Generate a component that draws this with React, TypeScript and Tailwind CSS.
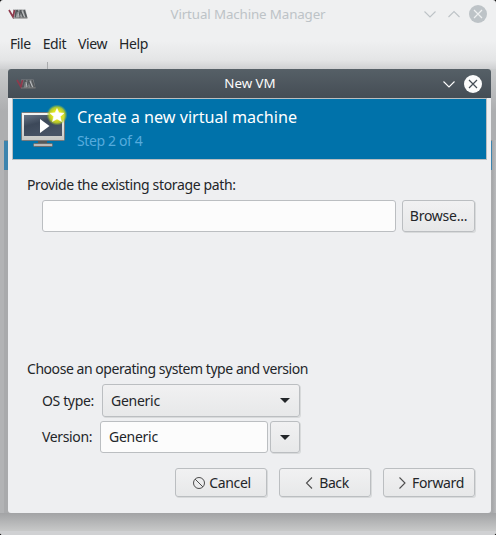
import type { ReactNode } from "react";

function Logo() {
  return (
    <svg width="20" height="10" viewBox="0 0 20 10">
      <path d="M5 0.500H17.500L19.500 9H7.500Z" fill="#8d9092" opacity="0.8" />
      <path d="M8.500 1L7 8.500M9 1L12 8.500M12.500 1L11.500 6M12.500 1L15.500 8.500M16 1L18.500 8.500" stroke="#54585b" strokeWidth="1.6" fill="none" />
      <path d="M10 3L11 8M14 2L16.500 8" stroke="#c4c6c7" strokeWidth="0.9" />
      <path d="M1 1L5 8L6.500 1" stroke="#8e3a4c" strokeWidth="1.700" fill="none" />
      <path d="M5 9H19.500" stroke="#777" strokeWidth="1" />
    </svg>
  );
}

function Chevron({ d, color }: { d: string; color: string }) {
  return (
    <svg width="12" height="12" viewBox="0 0 12 12" fill="none" stroke={color} strokeWidth="1.1">
      <path d={d} />
    </svg>
  );
}

function CloseIcon({ bg, fg }: { bg: string; fg: string }) {
  return (
    <svg width="18" height="18" viewBox="0 0 18 18">
      <circle cx="9" cy="9" r="9" fill={bg} />
      <path d="M5 5L13 13M13 5L5 13" stroke={fg} strokeWidth="1.2" />
    </svg>
  );
}

function ComputerIcon() {
  return (
    <svg width="48" height="44" viewBox="0 0 48 44" className="ml-[8px] mt-[7px] shrink-0 overflow-visible">
      <defs>
        <linearGradient id="frame" x1="0" y1="0" x2="0" y2="1">
          <stop offset="0" stopColor="#f6f6f4" />
          <stop offset="1" stopColor="#c6c7c4" />
        </linearGradient>
        <linearGradient id="screen" x1="0" y1="0" x2="0.5" y2="1">
          <stop offset="0" stopColor="#677485" />
          <stop offset="0.45" stopColor="#3c4859" />
          <stop offset="1" stopColor="#485466" />
        </linearGradient>
        <radialGradient id="glow">
          <stop offset="0.45" stopColor="#e3e61a" />
          <stop offset="0.75" stopColor="#c4d422" stopOpacity="0.85" />
          <stop offset="1" stopColor="#8fbf40" stopOpacity="0" />
        </radialGradient>
      </defs>
      <path d="M17 34H26V38H17Z" fill="#55585a" />
      <rect x="12.500" y="37.500" width="19" height="3" rx="1" fill="#bbb" stroke="#6a6c6d" />
      <rect x="0.500" y="6.500" width="43" height="28" rx="1" fill="url(#frame)" stroke="#77787a" />
      <rect x="3" y="9" width="38" height="21" fill="url(#screen)" />
      <path d="M19 13V27L28.500 20Z" fill="#fff" />
      <circle cx="36" cy="9" r="10.500" fill="url(#glow)" />
      <path d="M36 2.500L38 6.700L43 7.200L39.300 10.500L40.500 15.500L36 12.900L31.500 15.500L32.700 10.500L29 7.200L34 6.700Z" fill="#fff" stroke="#fff" strokeWidth="0.5" />
    </svg>
  );
}

function Button({ className, children }: { className: string; children: ReactNode }) {
  return (
    <button className={`flex items-center rounded-[3px] border border-[#bbbec1] bg-linear-to-b from-[#f1f1f2] to-[#e7e8e9] shadow-[1px_1px_0_#d8dadb] ${className}`}>
      {children}
    </button>
  );
}

function Arrow() {
  return (
    <svg width="10" height="5" viewBox="0 0 10 5">
      <path d="M0 0H10L5 5Z" fill="#232629" />
    </svg>
  );
}

function Dialog() {
  return (
    <section className="absolute left-2 top-[69px] flex h-[444px] w-[483px] flex-col overflow-hidden rounded-[3px] bg-[#eeeff1]">
      <header className="flex h-[29px] shrink-0 items-center bg-linear-to-b from-[#566067] to-[#454d55] pl-2 pr-[9px] text-[13.33px] tracking-normal text-[#fcfcfc]">
        <div className="w-[60px]"><Logo /></div>
        <h2 className="flex-1 pl-[18px] text-center">New VM</h2>
        <div className="flex w-[76px] items-center justify-end gap-[9px]">
          <Chevron d="M0.500 3.500L6 9L11.500 3.500" color="#fcfcfc" />
          <CloseIcon bg="#fcfcfc" fg="#454d55" />
        </div>
      </header>
      <div className="mx-1 flex h-[62px] shrink-0 border border-[#b9bec1] bg-[#0072aa]">
        <ComputerIcon />
        <div className="pl-[8px] pt-[6px]">
          <div className="h-[24px] text-[16.15px] leading-[24px] tracking-normal text-white">Create a new virtual machine</div>
          <div className="h-[23px] leading-[23px] text-[#56abdd]">Step 2 of 4</div>
        </div>
      </div>
      <div className="flex flex-1 flex-col pl-[19px] pr-4 pt-[14px]">
        <p className="h-[21px] leading-[21px]">Provide the existing storage path:</p>
        <div className="ml-[15px] mt-[5px] flex gap-[6px]">
          <div className="h-8 flex-1 rounded-[3px] border border-[#bbbec1] bg-[#fcfcfc]" />
          <Button className="h-8 w-[73px] justify-center pb-px tracking-[-0.26px]">Browse...</Button>
        </div>
        <p className="mt-[126px] h-[21px] leading-[21px] tracking-[-0.45px]">Choose an operating system type and version</p>
        <div className="ml-[15px] mt-[5px] flex items-center">
          <span className="w-[60px]">OS type:</span>
          <Button className="h-[33px] w-[198px] justify-between pl-2 pr-[9px] tracking-[-0.26px]">
            <span>Generic</span><Arrow />
          </Button>
        </div>
        <div className="ml-[15px] mt-1 flex items-center">
          <span className="w-[58px] pb-[2px]">Version:</span>
          <div className="flex h-8 w-[168px] items-center rounded-[3px] border border-[#bbbec1] bg-[#fcfcfc] pb-[2px] pl-2 tracking-[-0.26px]">Generic</div>
          <Button className="ml-[2px] h-8 w-[30px] justify-center"><Arrow /></Button>
        </div>
        <div className="mt-[15px] flex justify-end gap-3">
          <Button className="h-[29px] w-[92px] justify-center gap-1 pl-[2px]">
            <svg width="12" height="12" viewBox="0 0 12 12" fill="none" stroke="#4d4d4d"><circle cx="6" cy="6" r="5.500" /><path d="M2 2L10 10" /></svg>
            Cancel
          </Button>
          <Button className="h-[29px] w-[92px] justify-center gap-1 pl-[2px]">
            <Chevron d="M9 0.500L3.500 6L9 11.500" color="#4d4d4d" />Back
          </Button>
          <Button className="h-[29px] w-[92px] justify-center gap-1 pl-[2px]">
            <Chevron d="M3.500 0.500L9 6L3.500 11.500" color="#4d4d4d" />Forward
          </Button>
        </div>
      </div>
    </section>
  );
}

export default function App() {
  return (
    <main className="relative flex h-[535px] w-[496px] flex-col overflow-hidden whitespace-nowrap bg-black font-['Noto_Sans',sans-serif] text-[14px] tracking-[-0.36px] text-[#232629]">
      <div className="flex flex-1 flex-col overflow-hidden rounded-[3px] bg-[#eff0f1]">
        <header className="flex h-[28px] items-center pl-2 pr-[9px] text-[13.33px] tracking-[-0.12px]">
          <div className="w-[60px]"><Logo /></div>
          <h1 className="flex-1 pl-[17px] pt-px text-center text-[#bdc3c7]">Virtual Machine Manager</h1>
          <div className="flex w-[76px] items-center justify-end">
            <Chevron d="M0.500 3.500L6 9L11.500 3.500" color="#bdc3c7" />
            <div className="w-3" />
            <Chevron d="M0.500 9L6 3.500L11.500 9" color="#bdc3c7" />
            <div className="w-[9px]" />
            <CloseIcon bg="#bdc3c7" fg="#eff0f1" />
          </div>
        </header>
        <nav className="flex h-[32px] items-center gap-[12px] bg-linear-to-b from-[#eff0f1] from-40% to-[#e4e5e6] pb-[2px] pl-[10px] tracking-[-0.42px]">
          <span>File</span><span>Edit</span><span>View</span><span>Help</span>
        </nav>
        <div className="flex h-[9px] items-end bg-linear-to-b from-[#e4e5e6] to-[#cfd0d2]">
          <div className="ml-[47px] h-[7px] w-px bg-[#a9abad]" />
        </div>
        <div className="h-[71px] bg-linear-to-b from-[#c9cbcc] to-[#adaeb0] to-60%" />
        <div className="flex flex-1 flex-col bg-[#adaeb0]">
          <div className="flex h-[30px]">
            <div className="w-1 bg-[#b2b3b5]" />
            <div className="flex-1 border-t border-[#8c8f92] bg-[#3d84ae]" />
            <div className="w-1 bg-linear-to-r from-[#a5a6a8] to-[#b9babc]" />
          </div>
          <div className="flex flex-1">
            <div className="w-1 bg-[#b2b3b5]" />
            <div className="flex-1 bg-[#a9aaac]" />
            <div className="w-1 bg-linear-to-r from-[#a5a6a8] to-[#b9babc]" />
          </div>
        </div>
        <div className="h-[18px] bg-linear-to-b from-[#a2a3a5] to-[#c8c9c9]" />
        <div className="h-[4px] bg-[#d0d1d3]" />
      </div>
      <Dialog />
    </main>
  );
}
